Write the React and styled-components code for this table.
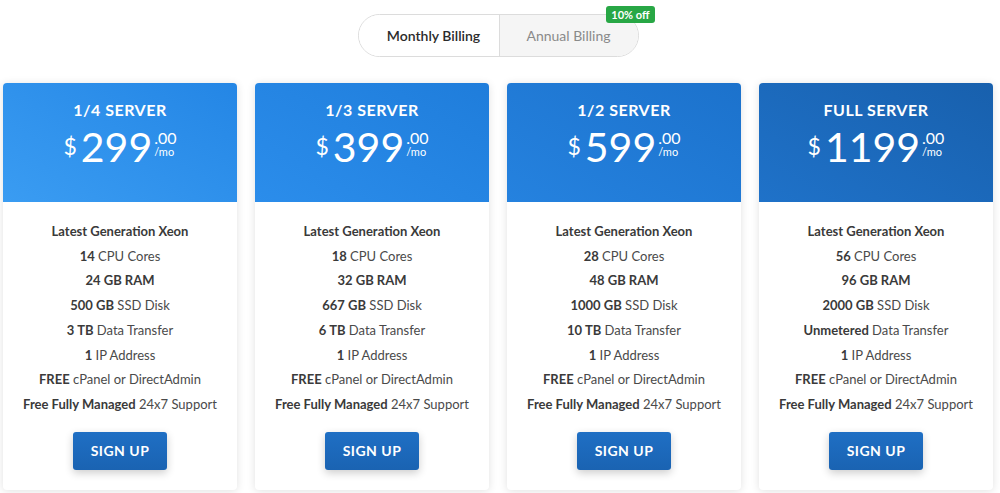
import styled, { createGlobalStyle } from 'styled-components';

const plans = [
    { name: '1/4 Server', price: '299', cores: 14, ram: 24, disk: 500, transfer: '3 TB', from: '#3a9cf2', to: '#2486e5' },
    { name: '1/3 Server', price: '399', cores: 18, ram: 32, disk: 667, transfer: '6 TB', from: '#2b8deb', to: '#1f7ddb' },
    { name: '1/2 Server', price: '599', cores: 28, ram: 48, disk: 1000, transfer: '10 TB', from: '#2582df', to: '#1c72cc' },
    { name: 'Full Server', price: '1199', cores: 56, ram: 96, disk: 2000, transfer: 'Unmetered', from: '#1f72c9', to: '#1860ad' },
];

const App = () => {
    return (
        <Page>
            <GlobalStyle />
            <ToggleRow>
                <Toggle>
                    <ToggleOption active>Monthly Billing</ToggleOption>
                    <ToggleOption>Annual Billing</ToggleOption>
                    <Badge>10% off</Badge>
                </Toggle>
            </ToggleRow>

            <Cards>
                {plans.map((plan) => (
                    <Card key={plan.name}>
                        <Header from={plan.from} to={plan.to}>
                            <PlanName>{plan.name}</PlanName>
                            <Price>
                                <Currency>$</Currency>
                                <Amount>{plan.price}</Amount>
                                <Cents>
                                    <span>.00</span>
                                    <small>/mo</small>
                                </Cents>
                            </Price>
                        </Header>
                        <Features>
                            <li><b>Latest Generation Xeon</b></li>
                            <li><b>{plan.cores}</b> CPU Cores</li>
                            <li><b>{plan.ram} GB RAM</b></li>
                            <li><b>{plan.disk} GB</b> SSD Disk</li>
                            <li><b>{plan.transfer}</b> Data Transfer</li>
                            <li><b>1</b> IP Address</li>
                            <li><b>FREE</b> cPanel or DirectAdmin</li>
                            <li><b>Free Fully Managed</b> 24x7 Support</li>
                        </Features>
                        <SignUp>Sign Up</SignUp>
                    </Card>
                ))}
            </Cards>
        </Page>
    );
};

export default App;

const GlobalStyle = createGlobalStyle`
    body {
        margin: 0;
        background: #ffffff;
        font-family: Lato, "Open Sans", sans-serif;
    }
`;

const Page = styled.div`
    width: 1000px;
    height: 493px;
    overflow: hidden;
`;

const ToggleRow = styled.div`
    display: flex;
    justify-content: center;
    padding: 14px 0 26px 0;
    margin-left: -4px;
`;

const Toggle = styled.div`
    position: relative;
    display: grid;
    grid-template-columns: 140px 1fr;
    width: 281px;
    height: 43px;
    border: 1px solid #dcdcdc;
    border-radius: 22px;
    box-sizing: border-box;
`;

const ToggleOption = styled.div`
    display: flex;
    align-items: center;
    justify-content: center;
    box-sizing: border-box;
    padding-left: ${(props) => (props.active ? '10px' : '0')};
    font-size: 14px;
    font-weight: ${(props) => (props.active ? 600 : 400)};
    color: ${(props) => (props.active ? '#2b2b2b' : '#8a8a8a')};
    background: ${(props) => (props.active ? '#ffffff' : '#f5f5f5')};
    border-radius: ${(props) => (props.active ? '22px 0 0 22px' : '0 22px 22px 0')};
    border-left: ${(props) => (props.active ? 'none' : '1px solid #dcdcdc')};
`;

const Badge = styled.span`
    position: absolute;
    top: -9px;
    right: -17px;
    background: #28a745;
    color: #ffffff;
    font-size: 11px;
    font-weight: 700;
    padding: 2px 5px;
    border-radius: 3px;
    line-height: 13px;
`;

const Cards = styled.div`
    display: grid;
    grid-template-columns: repeat(4, 234px);
    gap: 18px;
    padding-left: 3px;
`;

const Card = styled.div`
    display: flex;
    flex-direction: column;
    align-items: center;
    height: 407px;
    background: #ffffff;
    border-radius: 4px;
    overflow: hidden;
    box-shadow: 0 1px 8px rgba(0, 0, 0, 0.12);
`;

const Header = styled.div`
    width: 100%;
    height: 119px;
    box-sizing: border-box;
    padding-top: 17px;
    display: flex;
    flex-direction: column;
    align-items: center;
    color: #ffffff;
    background: linear-gradient(30deg, ${(props) => props.from}, ${(props) => props.to});
`;

const PlanName = styled.div`
    font-size: 16px;
    font-weight: 700;
    text-transform: uppercase;
    letter-spacing: 0.5px;
    line-height: 20px;
`;

const Price = styled.div`
    display: flex;
    align-items: flex-start;
    margin-top: 1px;
`;

const Currency = styled.span`
    font-size: 23px;
    margin-top: 11px;
    margin-right: 4px;
`;

const Amount = styled.span`
    font-size: 41px;
    line-height: 52px;
`;

const Cents = styled.span`
    display: flex;
    flex-direction: column;
    margin-top: 9px;
    margin-left: 2px;
    font-size: 16px;
    line-height: 15px;

    small {
        font-size: 11px;
        line-height: 14px;
    }
`;

const Features = styled.ul`
    list-style: none;
    margin: 0;
    padding: 17px 0 0 0;
    text-align: center;
    font-size: 13px;
    color: #4a4a4a;

    li {
        line-height: 24.7px;
        white-space: nowrap;
    }

    b {
        color: #3a3a3a;
    }
`;

const SignUp = styled.button`
    margin-top: 15px;
    width: 94px;
    height: 38px;
    border: none;
    border-radius: 3px;
    background: linear-gradient(#1f6fc4, #1a63b2);
    color: #ffffff;
    font-family: inherit;
    font-size: 14px;
    font-weight: 700;
    text-transform: uppercase;
    letter-spacing: 0.5px;
    box-shadow: 0 3px 8px rgba(0, 0, 0, 0.2);
    cursor: pointer;
`;
